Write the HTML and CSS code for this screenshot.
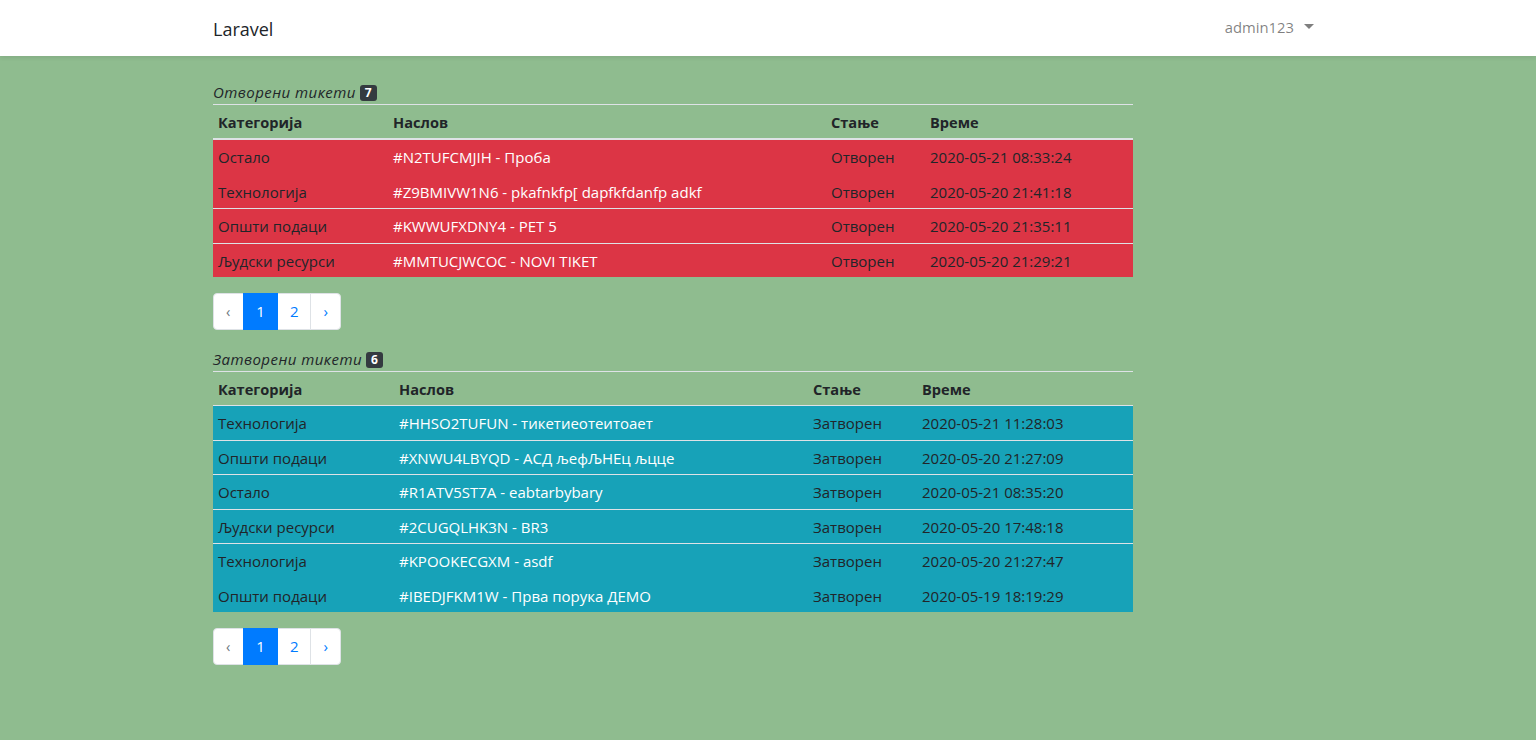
FILE: index.html
```html
<!DOCTYPE html>
<html lang="en">
<head>
<meta charset="utf-8">
<title>Laravel</title>
<link rel="stylesheet" href="styles.css">
</head>
<body>
<nav class="navbar">
  <div class="container nav-inner">
    <a class="brand" href="#">Laravel</a>
    <a class="user" href="#">admin123<span class="caret"></span></a>
  </div>
</nav>
<main class="main">
  <div class="container">
    <div class="col">
      <div class="section-title"><span class="st-text">Отворени тикети</span> <span class="badge">7</span></div>
      <table class="tickets t-open">
        <thead>
          <tr><th class="c1">Категорија</th><th class="c2">Наслов</th><th class="c3">Стање</th><th class="c4">Време</th></tr>
        </thead>
        <tbody class="danger">
          <tr><td>Остало</td><td class="title">#N2TUFCMJIH - Проба</td><td>Отворен</td><td>2020-05-21 08:33:24</td></tr>
          <tr class="nb"><td>Технологија</td><td class="title">#Z9BMIVW1N6 - pkafnkfp[ dapfkfdanfp adkf</td><td>Отворен</td><td>2020-05-20 21:41:18</td></tr>
          <tr><td>Општи подаци</td><td class="title">#KWWUFXDNY4 - PET 5</td><td>Отворен</td><td>2020-05-20 21:35:11</td></tr>
          <tr><td>Људски ресурси</td><td class="title">#MMTUCJWCOC - NOVI TIKET</td><td>Отворен</td><td>2020-05-20 21:29:21</td></tr>
        </tbody>
      </table>
      <ul class="pagination">
        <li class="page disabled"><span>‹</span></li>
        <li class="page active"><span>1</span></li>
        <li class="page"><a href="#">2</a></li>
        <li class="page"><a href="#">›</a></li>
      </ul>

      <div class="section-title"><span class="st-text">Затворени тикети</span> <span class="badge">6</span></div>
      <table class="tickets t-closed">
        <thead>
          <tr><th class="c1">Категорија</th><th class="c2">Наслов</th><th class="c3">Стање</th><th class="c4">Време</th></tr>
        </thead>
        <tbody class="info">
          <tr><td>Технологија</td><td class="title">#HHSO2TUFUN - тикетиеотеитоает</td><td>Затворен</td><td>2020-05-21 11:28:03</td></tr>
          <tr><td>Општи подаци</td><td class="title">#XNWU4LBYQD - АСД љефЉНЕц љцце</td><td>Затворен</td><td>2020-05-20 21:27:09</td></tr>
          <tr><td>Остало</td><td class="title">#R1ATV5ST7A - eabtarbybary</td><td>Затворен</td><td>2020-05-21 08:35:20</td></tr>
          <tr><td>Људски ресурси</td><td class="title">#2CUGQLHK3N - BR3</td><td>Затворен</td><td>2020-05-20 17:48:18</td></tr>
          <tr><td>Технологија</td><td class="title">#KPOOKECGXM - asdf</td><td>Затворен</td><td>2020-05-20 21:27:47</td></tr>
          <tr class="nb"><td>Општи подаци</td><td class="title">#IBEDJFKM1W - Прва порука ДЕМО</td><td>Затворен</td><td>2020-05-19 18:19:29</td></tr>
        </tbody>
      </table>
      <ul class="pagination">
        <li class="page disabled"><span>‹</span></li>
        <li class="page active"><span>1</span></li>
        <li class="page"><a href="#">2</a></li>
        <li class="page"><a href="#">›</a></li>
      </ul>
    </div>
  </div>
</main>
</body>
</html>
```

FILE: styles.css
```css
* { box-sizing: border-box; }
html, body { margin: 0; padding: 0; }
body {
  background: #8fbc8f;
  font-family: "Open Sans", "Noto Sans", sans-serif;
  font-size: 14.4px;
  line-height: 1.6;
  color: #212529;
}
a { text-decoration: none; }

.container {
  width: 1140px;
  margin: 0 auto;
  padding: 0 15px;
}

.navbar {
  background: #fff;
  height: 56px;
  box-shadow: 0 2px 4px rgba(0,0,0,.075);
}
.nav-inner {
  display: flex;
  align-items: center;
  justify-content: space-between;
  height: 56px;
}
.brand {
  color: #212529;
  font-size: 18px;
  line-height: 1;
  padding-top: 2px;
}
.user {
  color: rgba(0,0,0,.5);
  padding: 8px;
  padding-right: 9px;
  display: flex;
  align-items: center;
  font-size: 14.8px;
}
.caret {
  display: inline-block;
  margin-left: 10px;
  border-top: 5px solid rgba(0,0,0,.5);
  border-left: 5px solid transparent;
  border-right: 5px solid transparent;
  margin-top: -2px;
}

.main { padding: 24px 0; }
.col { width: 920px; }

.section-title {
  border-bottom: 1px solid #dee2e6;
  height: 25px;
  display: flex;
  align-items: center;
  gap: 4px;
}
.st-text {
  font-style: italic;
  font-size: 15px;
  letter-spacing: 0.45px;
  line-height: 24px;
}
.badge {
  display: inline-block;
  font-weight: 700;
  font-size: 12px;
  line-height: 1;
  color: #fff;
  background: #343a40;
  border-radius: 3px;
  padding: 2px 5px;
  margin-top: 2px;
}

.tickets {
  width: 920px;
  border-collapse: collapse;
  margin-bottom: 16px;
}
.tickets th, .tickets td {
  padding: 5px 5px;
  text-align: left;
  vertical-align: top;
  white-space: nowrap;
}
.tickets th {
  font-weight: 700;
  font-size: 14.6px;
  line-height: 23px;
  padding-top: 6px;
  padding-bottom: 4px;
}
.tickets td {
  font-size: 15px;
  line-height: 23.5px;
  padding-top: 6px;
  padding-bottom: 4px;
  border-top: 1px solid #dee2e6;
}
.t-open thead th { border-bottom: 2px solid #dee2e6; }
.t-closed thead th { border-bottom: 1px solid #dee2e6; }
.tickets tr.nb td { border-top: 0; padding-top: 7px; }
.tickets td.title { color: #fff; }
.danger { background: #dc3545; }
.info { background: #17a2b8; }

.t-open .c1 { width: 175px; }
.t-open .c2 { width: 438px; }
.t-open .c3 { width: 99px; }
.t-closed .c1 { width: 181px; }
.t-closed .c2 { width: 414px; }
.t-closed .c3 { width: 109px; }

.pagination {
  display: flex;
  list-style: none;
  margin: 0 0 17px;
  padding: 0;
}
.page span, .page a {
  display: block;
  padding: 8px 12px;
  line-height: 19px;
  border: 1px solid #dee2e6;
  margin-left: -1px;
  background: #fff;
  color: #007bff;
}
.page.disabled span { padding-right: 13px; }
.page.active span, .page a { font-size: 15px; }
.page:first-child span { margin-left: 0; border-radius: 4px 0 0 4px; }
.page:last-child a { border-radius: 0 4px 4px 0; }
.page.disabled span { color: #6c757d; }
.page.active span { background: #007bff; border-color: #007bff; color: #fff; position: relative; }
```
